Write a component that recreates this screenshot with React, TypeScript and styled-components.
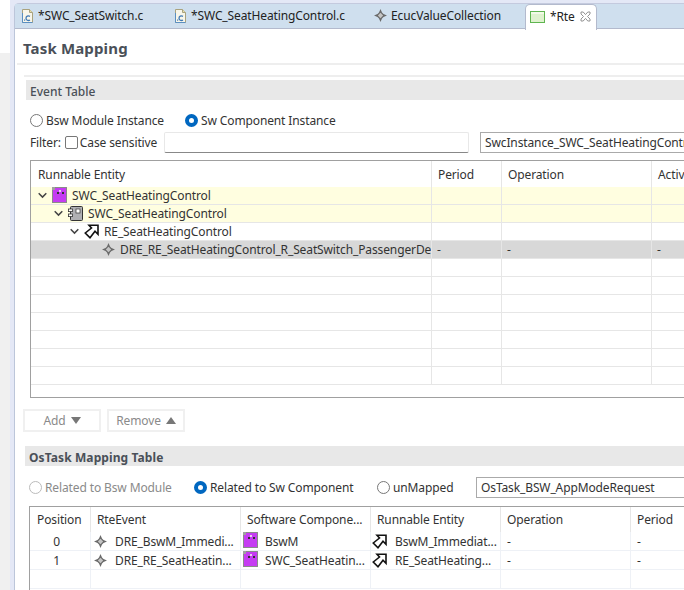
import React from "react";
import styled, { createGlobalStyle } from "styled-components";

const Global = createGlobalStyle`
  html, body { margin: 0; padding: 0; overflow: hidden; background: #fff; }
  * { box-sizing: border-box; }
  body { font-family: "Noto Sans", "Noto Sans CJK KR", sans-serif; font-size: 12px; letter-spacing: -0.12px; color: #333; }
`;

const Page = styled.div`
  width: 684px; height: 590px; display: flex; overflow: hidden; background: #e4e8f6;
`;
const LeftStrip = styled.div`
  width: 10px; flex: none; background: #fff; display: flex; flex-direction: column;
  &::after { content: ""; margin-top: 53px; flex: 1; background: #f0f0f0; }
`;
const Editor = styled.div`
  margin: 3px 0 0 4px; flex: 1; min-width: 0; display: flex; flex-direction: column;
  background: #fff; border-left: 1px solid #bcc6da; border-top: 1px solid #c4cade; border-top-left-radius: 5px;
`;
const TabBar = styled.div`
  height: 25px; flex: none; display: flex; align-items: stretch; background: #cfdfee; border-bottom: 1px solid #b3bacd;
`;
const Tab = styled.div<{ $w: number; $pad?: number; $gap?: number }>`
  width: ${p => p.$w}px; flex: none; display: flex; align-items: center; gap: ${p => p.$gap ?? 3}px; padding-left: ${p => p.$pad ?? 6}px;
  color: #222; white-space: nowrap; padding-bottom: 1px;
`;
const ActiveTab = styled.div`
  width: 72px; height: 26px; flex: none; display: flex; align-items: center; gap: 5px; padding-left: 4px; padding-bottom: 2px;
  background: #fff; border: 1px solid #b3bacd; border-bottom: none; border-radius: 5px 5px 0 0; color: #222; white-space: nowrap;
`;
const Body = styled.div`
  flex: 1; min-height: 0; display: flex; flex-direction: column; padding-left: 2px;
`;
const Title = styled.div`
  height: 36px; flex: none; border-bottom: 2px solid #eee; padding: 9px 0 0 6px;
  font-size: 15px; font-weight: 700; line-height: 20px; letter-spacing: 0.15px; color: #4a5058;
`;
const Section = styled.div`
  margin: 10px 0 0 7px; border-top: 2px solid #eee; padding-top: 3px;
`;
const OsSection = styled.div`
  margin: 14px 0 0 8px;
`;
const SectionHead = styled.div<{ $bold?: boolean }>`
  height: 20px; margin-left: ${p => (p.$bold ? 0 : 2)}px; background: #e8e8e8; padding-left: 4px; line-height: 23px;
  font-weight: ${p => (p.$bold ? 700 : 500)}; letter-spacing: ${p => (p.$bold ? "0.1px" : "0")}; color: #4a5058; white-space: nowrap;
`;
const Row = styled.div<{ $mt: number; $ml: number; $h: number }>`
  display: flex; align-items: center; height: ${p => p.$h}px; margin-top: ${p => p.$mt}px; margin-left: ${p => p.$ml}px;
  white-space: nowrap;
`;
const RadioLabel = styled.label<{ $w?: number; $off?: boolean }>`
  display: flex; align-items: center; gap: 3px; flex: none; width: ${p => (p.$w ? `${p.$w}px` : "auto")};
  color: ${p => (p.$off ? "#8a8a8a" : "#333")};
`;
const RadioDot = styled.span<{ $on?: boolean; $off?: boolean }>`
  width: 13px; height: 13px; flex: none; border-radius: 50%;
  border: ${p => (p.$on ? "4px solid #0067c0" : `1px solid ${p.$off ? "#bbb" : "#777"}`)}; background: #fff;
`;
const FilterLabel = styled.div`
  width: 134px; flex: none; display: flex; align-items: center;
`;
const Check = styled.span`
  width: 13px; height: 13px; flex: none; border: 1px solid #777; border-radius: 2px; background: #fff; margin: 0 2px 0 4px;
`;
const TextBox = styled.div`
  width: 305px; height: 21px; flex: none; border: 1px solid #e8e8e8; border-bottom: 1px solid #888; border-radius: 2px; background: #fff;
`;
const Combo = styled.div<{ $ml: number }>`
  flex: 1; min-width: 0; margin-left: ${p => p.$ml}px; height: 21px; border: 1px solid #aaa; border-right: none; padding-left: 4px;
  line-height: 19px; color: #333; overflow: hidden; white-space: nowrap;
`;
const Table = styled.div<{ $h: number; $mt: number; $ml: number }>`
  height: ${p => p.$h}px; margin-top: ${p => p.$mt}px; margin-left: ${p => p.$ml}px; border: 1px solid #a0a0a0; border-right: none; overflow: hidden; background: #fff;
`;
const GridRow = styled.div<{ $cols: string; $h: number; $bg?: string; $line?: string }>`
  display: grid; grid-template-columns: ${p => p.$cols}; height: ${p => p.$h}px; background: ${p => p.$bg ?? "transparent"};
  border-bottom: 1px solid ${p => p.$line ?? "#e6e6e6"};
`;
const HeadRow = styled(GridRow)`
  border-bottom: none;
`;
const Cell = styled.div<{ $line?: string; $indent?: number; $center?: boolean; $gap?: number }>`
  display: flex; align-items: center; min-width: 0; overflow: hidden; white-space: nowrap; gap: ${p => p.$gap ?? 5}px;
  padding-left: ${p => p.$indent ?? 6}px; justify-content: ${p => (p.$center ? "center" : "flex-start")};
  padding-right: ${p => (p.$center ? 7 : 0)}px;
  border-right: 1px solid ${p => p.$line ?? "#e6e6e6"}; color: #333;
`;
const Clip = styled.span`
  overflow: hidden; min-width: 0;
`;
const Buttons = styled.div`
  display: flex; gap: 6px; margin: 11px 0 0 -1px;
`;
const Btn = styled.div`
  width: 78px; height: 23px; border: 2px solid #f0f0f0; color: #8a8a8a; display: flex; align-items: center; justify-content: center; gap: 5px;
`;
const Tri = styled.span<{ $up?: boolean }>`
  width: 0; height: 0; border-left: 5px solid transparent; border-right: 5px solid transparent;
  ${p => (p.$up ? "border-bottom: 7px solid #777;" : "border-top: 7px solid #777;")}
`;

const CFile = () => (
  <svg width="14" height="16" viewBox="0 0 14 16" style={{ flex: "none" }}>
    <path d="M1.500 1.500h7l3 3v10h-10z" fill="#f8f6ea" stroke="#a9a27e" />
    <path d="M8.500 1.500v3h3" fill="#e8dfae" stroke="#a9a27e" />
    <path d="M1.500 5v9.500h10" fill="none" stroke="#5b8fc0" />
    <path d="M9 8.300C7 7.300 5 8.200 5 10.200s2 2.900 4 1.900" fill="none" stroke="#3f78b4" strokeWidth="1.300" />
    <rect x="3" y="11.500" width="1.200" height="1.200" fill="#3f78b4" />
  </svg>
);
const Diamond = () => (
  <svg width="13" height="13" viewBox="0 0 13 13" style={{ flex: "none" }}>
    <path d="M6.500 0L8 3.500 9.500 5 13 6.500 9.500 8 8 9.500 6.500 13 5 9.500 3.500 8 0 6.500 3.500 5 5 3.500z" fill="#6a6a6a" />
    <path d="M6.500 3.800L9.200 6.500 6.500 9.200 3.800 6.500z" fill="#c4c4c4" />
  </svg>
);
const Chevron = () => (
  <svg width="9" height="7" viewBox="0 0 9 7" style={{ flex: "none" }}>
    <path d="M.7 1.300l3.800 3.800 3.800-3.800" fill="none" stroke="#444" strokeWidth="1.500" />
  </svg>
);
const Swc = () => (
  <svg width="15" height="16" viewBox="0 0 15 16" style={{ flex: "none", marginTop: -2 }}>
    <rect x="0.500" y="0.500" width="14" height="15" fill="#c53cf2" stroke="#8a8a8a" />
    <rect x="0" y="0" width="3" height="3" fill="#a0a0a0" />
    <rect x="5" y="5" width="2" height="2" fill="#333" />
    <rect x="7" y="3" width="2" height="2" fill="#e8d0f0" />
    <rect x="10" y="5" width="2" height="2" fill="#333" />
  </svg>
);
const Block = () => (
  <svg width="15" height="15" viewBox="0 0 15 15" style={{ flex: "none" }}>
    <rect x="2.500" y="0.500" width="12" height="14" rx="1" fill="#b0b0b4" stroke="#333" />
    <rect x="8" y="3" width="4" height="4" fill="#fff" stroke="#333" strokeWidth="0.700" />
    <rect x="0.500" y="3" width="4" height="2.600" fill="#fff" stroke="#333" strokeWidth="0.800" />
    <rect x="0.500" y="8" width="4" height="2.600" fill="#fff" stroke="#333" strokeWidth="0.800" />
  </svg>
);
const Runnable = () => (
  <svg width="15" height="15" viewBox="0 0 15 15" style={{ flex: "none" }}>
    <path d="M5 1.300H14V10.300L11 7.300 6 13.700 1.300 9 7.500 4z" fill="#fff" stroke="#111" strokeWidth="1.600" />
  </svg>
);
const RteIcon = () => (
  <svg width="15" height="12" viewBox="0 0 15 12" style={{ flex: "none" }}>
    <rect x="0.500" y="0.500" width="14" height="11" fill="#dff2cf" stroke="#5fb550" />
    <rect x="1" y="1" width="13" height="2" fill="#f2fae8" />
  </svg>
);
const CloseIcon = () => (
  <svg width="11" height="11" viewBox="0 0 11 11" style={{ flex: "none" }}>
    <path d="M1 1h2.200l2.300 2.600L7.800 1H10v2L7.500 5.500 10 8v2H7.800L5.500 7.400 3.200 10H1V8l2.500-2.500L1 3z" fill="#fff" stroke="#888" strokeWidth="0.900" />
  </svg>
);

const COLS1 = "401px 70px 150px 60px";
const COLS2 = "61px 150px 130px 130px 130px 60px";
const L = "#eef1f6";
const blankRows1 = [0, 1, 2, 3, 4, 5, 6];

export default function App() {
  return (
    <Page>
      <Global />
      <LeftStrip />
      <Editor>
        <TabBar>
          <Tab $w={153}><CFile />*SWC_SeatSwitch.c</Tab>
          <Tab $w={199}><CFile />*SWC_SeatHeatingControl.c</Tab>
          <Tab $w={158} $pad={7} $gap={4}><Diamond />EcucValueCollection</Tab>
          <ActiveTab><RteIcon />*Rte<CloseIcon /></ActiveTab>
        </TabBar>
        <Body>
          <Title>Task Mapping</Title>
          <Section>
            <SectionHead>Event Table</SectionHead>
            <Row $h={20} $mt={10} $ml={6}>
              <RadioLabel $w={155}><RadioDot />Bsw Module Instance</RadioLabel>
              <RadioLabel><RadioDot $on />Sw Component Instance</RadioLabel>
            </Row>
            <Row $h={21} $mt={2} $ml={6}>
              <FilterLabel>Filter:<Check />Case sensitive</FilterLabel>
              <TextBox />
              <Combo $ml={11}>SwcInstance_SWC_SeatHeatingControl</Combo>
            </Row>
            <Table $h={238} $mt={7} $ml={6}>
              <HeadRow $cols={COLS1} $h={26}>
                <Cell $indent={7}>Runnable Entity</Cell><Cell>Period</Cell><Cell>Operation</Cell><Cell $line="transparent">Activation</Cell>
              </HeadRow>
              <GridRow $cols={COLS1} $h={18} $bg="#fffee0">
                <Cell $indent={7}><Chevron /><Swc />SWC_SeatHeatingControl</Cell><Cell /><Cell /><Cell />
              </GridRow>
              <GridRow $cols={COLS1} $h={18} $bg="#fffee0">
                <Cell $indent={23}><Chevron /><Block />SWC_SeatHeatingControl</Cell><Cell /><Cell /><Cell />
              </GridRow>
              <GridRow $cols={COLS1} $h={18}>
                <Cell $indent={39}><Chevron /><Runnable />RE_SeatHeatingControl</Cell><Cell /><Cell /><Cell />
              </GridRow>
              <GridRow $cols={COLS1} $h={18} $bg="#d8d8d8">
                <Cell $indent={71}><Diamond /><Clip>DRE_RE_SeatHeatingControl_R_SeatSwitch_PassengerDetected</Clip></Cell>
                <Cell $indent={5}>-</Cell><Cell $indent={5}>-</Cell><Cell $indent={5}>-</Cell>
              </GridRow>
              {blankRows1.map(i => (
                <GridRow key={i} $cols={COLS1} $h={18}><Cell /><Cell /><Cell /><Cell /></GridRow>
              ))}
            </Table>
            <Buttons>
              <Btn>Add<Tri /></Btn>
              <Btn>Remove<Tri $up /></Btn>
            </Buttons>
          </Section>
          <OsSection>
            <SectionHead $bold>OsTask Mapping Table</SectionHead>
            <Row $h={21} $mt={11} $ml={4}>
              <RadioLabel $w={165} $off><RadioDot $off />Related to Bsw Module</RadioLabel>
              <RadioLabel $w={183}><RadioDot $on />Related to Sw Component</RadioLabel>
              <RadioLabel $w={76}><RadioDot />unMapped</RadioLabel>
              <Combo $ml={23}>OsTask_BSW_AppModeRequest</Combo>
            </Row>
            <Table $h={90} $mt={8} $ml={4}>
              <HeadRow $cols={COLS2} $h={25}>
                <Cell $indent={7}>Position</Cell><Cell>RteEvent</Cell><Cell>Software Compone...</Cell><Cell>Runnable Entity</Cell><Cell>Operation</Cell><Cell $line="transparent">Period</Cell>
              </HeadRow>
              <GridRow $cols={COLS2} $h={19} $line={L}>
                <Cell $center $line={L} $indent={0}>0</Cell>
                <Cell $line={L} $indent={3} $gap={8}><Diamond />DRE_BswM_Immedi...</Cell>
                <Cell $line={L} $indent={2} $gap={7}><Swc />BswM</Cell>
                <Cell $line={L} $indent={1} $gap={8}><Runnable />BswM_Immediat...</Cell>
                <Cell $line={L} $indent={6}>-</Cell><Cell $line={L} $indent={6}>-</Cell>
              </GridRow>
              <GridRow $cols={COLS2} $h={19} $line={L}>
                <Cell $center $line={L} $indent={0}>1</Cell>
                <Cell $line={L} $indent={3} $gap={8}><Diamond />DRE_RE_SeatHeatin...</Cell>
                <Cell $line={L} $indent={2} $gap={7}><Swc />SWC_SeatHeatin...</Cell>
                <Cell $line={L} $indent={1} $gap={8}><Runnable />RE_SeatHeating...</Cell>
                <Cell $line={L} $indent={6}>-</Cell><Cell $line={L} $indent={6}>-</Cell>
              </GridRow>
              <GridRow $cols={COLS2} $h={19} $line={L}>
                <Cell $line={L} /><Cell $line={L} /><Cell $line={L} /><Cell $line={L} /><Cell $line={L} /><Cell $line={L} />
              </GridRow>
            </Table>
          </OsSection>
        </Body>
      </Editor>
    </Page>
  );
}
